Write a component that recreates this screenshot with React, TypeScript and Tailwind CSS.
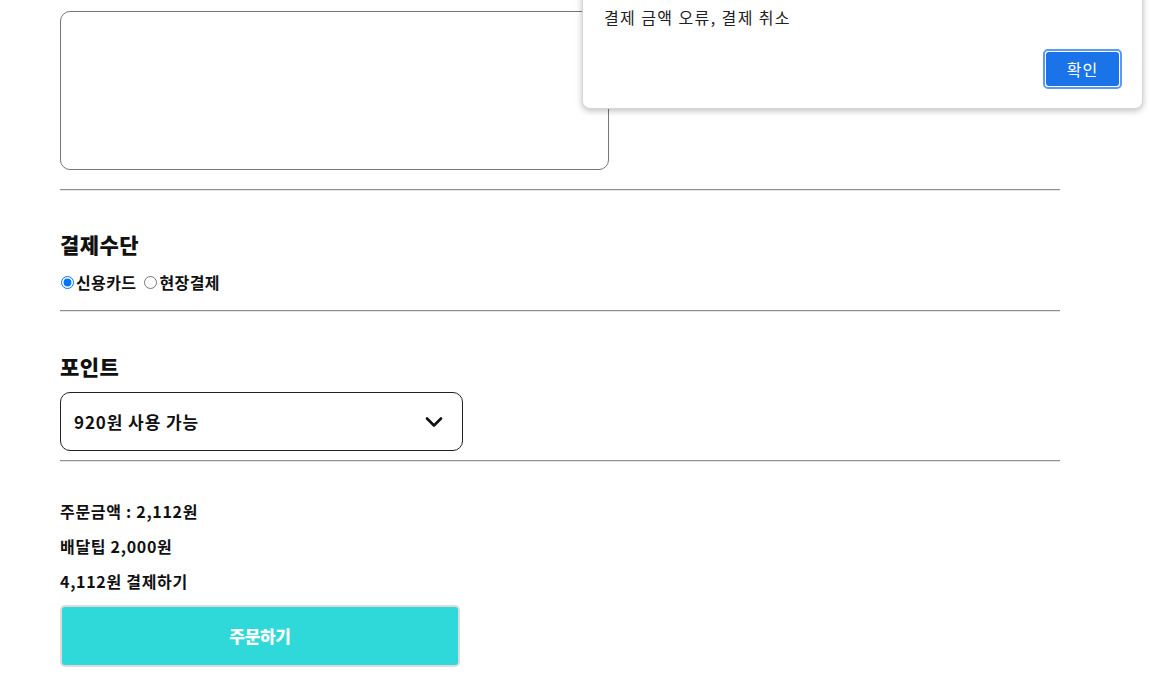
import React from "react";

export default function App() {
  const font = { fontFamily: '"Noto Sans CJK KR", "Noto Sans", sans-serif' };
  return (
    <div className="relative w-[1158px] h-[688px] overflow-hidden bg-white text-[#111]" style={font}>
      <div className="pl-[60px] pt-[11px] w-[1060px] flex flex-col">
        <textarea className="w-[549px] h-[159px] border border-[#767676] rounded-[10px] resize-none outline-none" />
        <div className="mt-[19px] w-[1000px] border-t border-t-[#8f8f8f] border-b border-b-[#e6e6e6]" />

        <h2 className="mt-[39px] text-[21px] leading-[28px] font-black tracking-[0.4px]">결제수단</h2>
        <div className="mt-[14px] h-[20px] flex items-center text-[16px] font-bold tracking-[0.4px]">
          <label className="flex items-center">
            <input type="radio" name="pay" defaultChecked className="w-[13px] h-[13px] m-0 ml-[1px] mr-[2px] accent-[#0075ff]" />
            <span>신용카드</span>
          </label>
          <label className="flex items-center ml-[8px]">
            <input type="radio" name="pay" className="w-[13px] h-[13px] m-0 mr-[2px]" />
            <span>현장결제</span>
          </label>
        </div>
        <div className="mt-[18px] w-[1000px] border-t border-t-[#8f8f8f] border-b border-b-[#e6e6e6]" />

        <h2 className="mt-[40px] text-[21px] leading-[28px] font-black tracking-[0.4px]">포인트</h2>
        <div className="mt-[12px] w-[403px] h-[59px] border border-[#222] rounded-[10px] flex items-center justify-between pl-[13px] pr-[19px]">
          <span className="text-[17px] font-bold tracking-[0.9px]">920원 사용 가능</span>
          <svg width="18" height="12" viewBox="0 0 18 12" fill="none">
            <path d="M2 2.5 L9 9.5 L16 2.5" stroke="#111" strokeWidth="2.6" strokeLinecap="round" strokeLinejoin="round" />
          </svg>
        </div>
        <div className="mt-[9px] w-[1000px] border-t border-t-[#8f8f8f] border-b border-b-[#e6e6e6]" />

        <div className="mt-[32px] flex flex-col text-[16px] font-bold leading-[35px] tracking-[0.7px]">
          <p>주문금액 : 2,112원</p>
          <p>배달팁 2,000원</p>
          <p>4,112원 결제하기</p>
        </div>
        <button className="mt-[6px] w-[400px] h-[62px] bg-[#30d9d9] border-2 border-[#dcdcdc] rounded-[5px] text-white text-[17px] font-black tracking-[-0.3px]">
          주문하기
        </button>
      </div>

      <div className="absolute left-[582px] top-[-20px] w-[561px] h-[129px] bg-white rounded-b-[8px] border border-[#d6d6d6] shadow-[0_2px_6px_rgba(0,0,0,0.25)]">
        <p className="absolute left-[21px] top-[25px] text-[16px] text-[#202124] leading-[22px] tracking-[1.4px]" style={{ fontFamily: '"Noto Sans CJK KR", sans-serif' }}>
          결제 금액 오류, 결제 취소
        </p>
        <button className="absolute left-[460px] top-[68px] w-[79px] h-[40px] rounded-[5px] border-2 border-[#5b9af3] p-[1px] bg-white">
          <span className="flex w-full h-full items-center justify-center bg-[#1a73e8] rounded-[3px] text-white text-[16px] tracking-[1px]" style={{ fontFamily: '"Noto Sans CJK KR", sans-serif' }}>
            확인
          </span>
        </button>
      </div>
    </div>
  );
}
